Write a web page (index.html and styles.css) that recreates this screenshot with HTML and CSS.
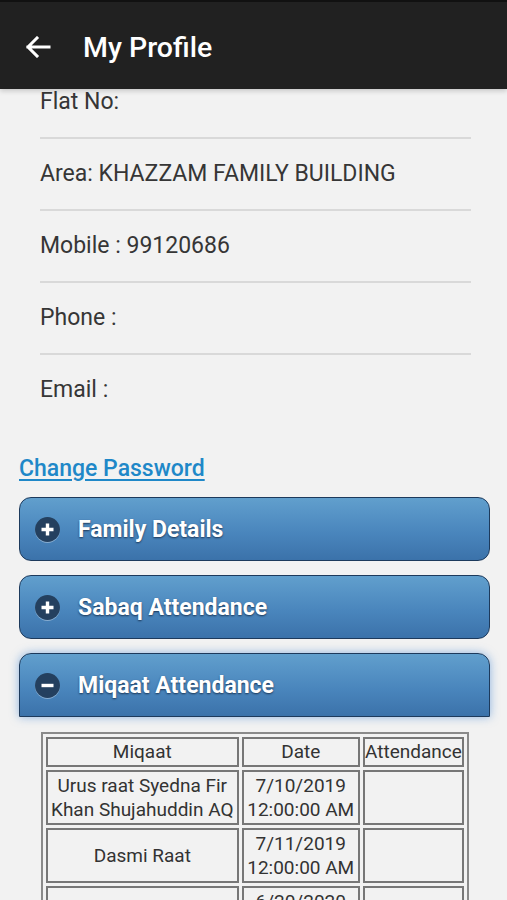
FILE: index.html
```html
<!DOCTYPE html>
<html>
<head>
<meta charset="utf-8">
<link rel="stylesheet" href="styles.css">
</head>
<body>
<header class="appbar">
  <svg class="back" width="26" height="22" viewBox="0 0 26 22">
    <path d="M24 11H3 M12 2 L3 11 L12 20" fill="none" stroke="#fff" stroke-width="3" stroke-linecap="square" stroke-linejoin="miter"/>
  </svg>
  <h1 class="title">My Profile</h1>
</header>
<main class="content">
  <ul class="fields">
    <li class="field">Flat No:</li>
    <li class="field">Area: KHAZZAM FAMILY BUILDING</li>
    <li class="field">Mobile : 99120686</li>
    <li class="field">Phone :</li>
    <li class="field last">Email :</li>
  </ul>
  <a class="link" href="#">Change Password</a>
  <div class="panels">
    <div class="panel">
      <span class="ico"><svg width="25" height="25" viewBox="0 0 25 25"><path d="M12.5 6.5v12M6.5 12.5h12" stroke="#fff" stroke-width="3.4"/></svg></span>
      <span class="ptitle">Family Details</span>
    </div>
    <div class="panel">
      <span class="ico"><svg width="25" height="25" viewBox="0 0 25 25"><path d="M12.5 6.5v12M6.5 12.5h12" stroke="#fff" stroke-width="3.4"/></svg></span>
      <span class="ptitle">Sabaq Attendance</span>
    </div>
    <div class="panel open">
      <span class="ico"><svg width="25" height="25" viewBox="0 0 25 25"><path d="M6.5 12.5h12" stroke="#fff" stroke-width="3.4"/></svg></span>
      <span class="ptitle">Miqaat Attendance</span>
    </div>
  </div>
  <table class="grid">
    <tr><th class="c1">Miqaat</th><th class="c2">Date</th><th class="c3">Attendance</th></tr>
    <tr><td>Urus raat Syedna Fir Khan Shujahuddin AQ</td><td>7/10/2019 12:00:00 AM</td><td></td></tr>
    <tr><td>Dasmi Raat</td><td>7/11/2019 12:00:00 AM</td><td></td></tr>
    <tr><td>Ashara</td><td>6/20/2020 12:00:00 AM</td><td></td></tr>
  </table>
</main>
</body>
</html>
```
FILE: styles.css
```css
html, body {
  margin: 0;
  padding: 0;
  background: #f2f2f2;
  font-family: Roboto, "Liberation Sans", sans-serif;
}
.appbar {
  height: 89px;
  background: #212121;
  border-top: 2px solid #111;
  box-sizing: border-box;
  display: flex;
  align-items: center;
  padding: 3px 0 0 25px;
  box-shadow: 0 2px 5px rgba(0,0,0,0.18);
  position: relative;
  z-index: 2;
}
.back {
  display: block;
}
.title {
  margin: 0 0 0 32px;
  color: #fff;
  font-size: 28.5px;
  font-weight: 500;
}
.content {
  padding: 0 17px 0 19px;
}
.fields {
  list-style: none;
  margin: 0;
  padding: 0 19px 0 21px;
}
.field {
  font-size: 23px;
  line-height: 26px;
  color: #363636;
  padding: 22px 0;
  border-bottom: 2px solid #d9d9d9;
}
.field:first-child {
  padding-top: 0;
}
.field.last {
  border-bottom: none;
}
.link {
  display: inline-block;
  margin-top: 31px;
  font-size: 23px;
  line-height: 26px;
  font-weight: 500;
  color: #1f88c8;
  text-decoration: underline;
  text-underline-offset: 3px;
}
.panels {
  display: flex;
  flex-direction: column;
  gap: 14px;
  margin-top: 15px;
}
.panel {
  height: 64px;
  box-sizing: border-box;
  border: 1px solid #1d3a5c;
  border-radius: 12px;
  background: linear-gradient(#619fcd, #4a86bd 55%, #3b72aa);
  display: flex;
  align-items: center;
  padding-left: 15px;
  gap: 18px;
}
.panel.open {
  border-radius: 12px 12px 0 0;
  box-shadow: 0 0 10px rgba(60,130,210,0.55);
}
.ico {
  width: 25px;
  height: 25px;
  border-radius: 50%;
  background: #24405f;
  box-shadow: 0 1px 0 rgba(255,255,255,0.35);
  display: block;
}
.ico svg {
  display: block;
}
.ptitle {
  color: #fff;
  font-size: 23px;
  font-weight: 700;
  text-shadow: 0 1px 2px #1b3555;
}
.grid {
  margin: 15px 0 0 22px;
  width: 428px;
  border: 2px solid #8a8a8a;
  border-spacing: 3px;
  color: #333;
  font-size: 19px;
  line-height: 24px;
}
.grid th, .grid td {
  border: 2px solid #777;
  text-align: center;
  font-weight: 400;
  padding: 0;
  vertical-align: middle;
  box-sizing: border-box;
}
.grid th {
  height: 30px;
}
.grid td {
  height: 55px;
}
.c1 { width: 192px; }
.c2 { width: 118px; }
.c3 { width: 100px; }
```
